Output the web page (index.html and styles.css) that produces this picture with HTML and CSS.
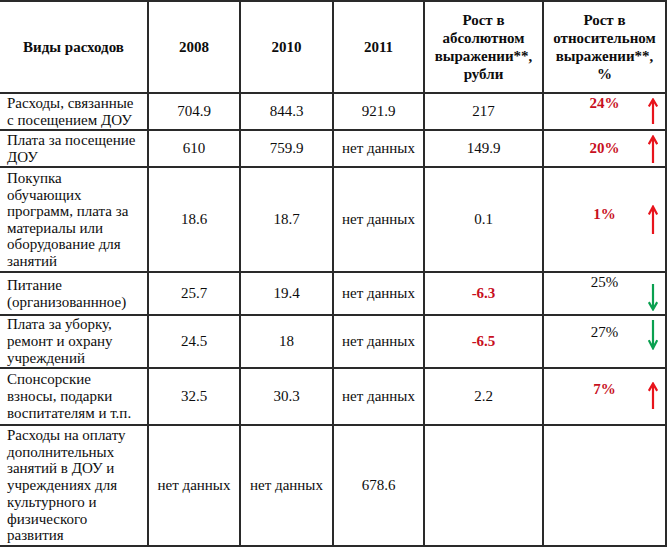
FILE: index.html
```html
<!DOCTYPE html>
<html lang="ru">
<head>
<meta charset="utf-8">
<title>Виды расходов</title>
<link rel="stylesheet" href="styles.css">
</head>
<body>
<table class="costs">
  <colgroup>
    <col class="c-name">
    <col class="c-y1">
    <col class="c-y2">
    <col class="c-y3">
    <col class="c-abs">
    <col class="c-rel">
  </colgroup>
  <thead>
    <tr class="r-head">
      <th>Виды расходов</th>
      <th>2008</th>
      <th>2010</th>
      <th>2011</th>
      <th>Рост в абсолютном выражении**, рубли</th>
      <th>Рост в относительном выражении**, %</th>
    </tr>
  </thead>
  <tbody>
    <tr class="r1">
      <td class="name">Расходы, связанные<br>с посещением ДОУ</td>
      <td>704.9</td>
      <td>844.3</td>
      <td>921.9</td>
      <td>217</td>
      <td class="rel up lift-16"><span class="pct">24%</span><svg class="arrow a1" viewBox="0 0 10 26" preserveAspectRatio="none"><path d="M5 26V1.5M0.8 8.5L5 1.5L9.2 8.5"/></svg></td>
    </tr>
    <tr class="r2">
      <td class="name">Плата за посещение<br>ДОУ</td>
      <td>610</td>
      <td>759.9</td>
      <td>нет данных</td>
      <td>149.9</td>
      <td class="rel up"><span class="pct">20%</span><svg class="arrow a2" viewBox="0 0 10 26" preserveAspectRatio="none"><path d="M5 26V1.5M0.8 8.5L5 1.5L9.2 8.5"/></svg></td>
    </tr>
    <tr class="r3">
      <td class="name">Покупка<br>обучающих<br>программ, плата за<br>материалы или<br>оборудование для<br>занятий</td>
      <td>18.6</td>
      <td>18.7</td>
      <td>нет данных</td>
      <td>0.1</td>
      <td class="rel up lift-10"><span class="pct">1%</span><svg class="arrow a3" viewBox="0 0 10 26" preserveAspectRatio="none"><path d="M5 26V1.5M0.8 8.5L5 1.5L9.2 8.5"/></svg></td>
    </tr>
    <tr class="r4">
      <td class="name">Питание<br>(организованнное)</td>
      <td>25.7</td>
      <td>19.4</td>
      <td>нет данных</td>
      <td class="neg">-6.3</td>
      <td class="rel down lift-22"><span class="pct">25%</span><svg class="arrow a4" viewBox="0 0 10 26" preserveAspectRatio="none"><path d="M5 0V24.5M0.8 17.5L5 24.5L9.2 17.5"/></svg></td>
    </tr>
    <tr class="r5">
      <td class="name">Плата за уборку,<br>ремонт и охрану<br>учреждений</td>
      <td>24.5</td>
      <td>18</td>
      <td>нет данных</td>
      <td class="neg">-6.5</td>
      <td class="rel down lift-18"><span class="pct">27%</span><svg class="arrow a5" viewBox="0 0 10 26" preserveAspectRatio="none"><path d="M5 0V24.5M0.8 17.5L5 24.5L9.2 17.5"/></svg></td>
    </tr>
    <tr class="r6">
      <td class="name">Спонсорские<br>взносы, подарки<br>воспитателям и т.п.</td>
      <td>32.5</td>
      <td>30.3</td>
      <td>нет данных</td>
      <td>2.2</td>
      <td class="rel up lift-14"><span class="pct">7%</span><svg class="arrow a6" viewBox="0 0 10 26" preserveAspectRatio="none"><path d="M5 26V1.5M0.8 8.5L5 1.5L9.2 8.5"/></svg></td>
    </tr>
    <tr class="r7">
      <td class="name">Расходы на оплату<br>дополнительных<br>занятий в ДОУ и<br>учреждениях для<br>культурного и<br>физического<br>развития</td>
      <td>нет данных</td>
      <td>нет данных</td>
      <td>678.6</td>
      <td></td>
      <td class="rel"></td>
    </tr>
  </tbody>
</table>
</body>
</html>
```

FILE: styles.css
```css
html, body {
  margin: 0;
  padding: 0;
  background: #ffffff;
}

.costs {
  border-collapse: collapse;
  table-layout: fixed;
  width: 666px;
  font-family: "Liberation Serif", "Times New Roman", serif;
  font-size: 15px;
  line-height: 17px;
  color: #0d0d0d;
}

.c-name { width: 148px; }
.c-y1 { width: 92px; }
.c-y2 { width: 93px; }
.c-y3 { width: 91px; }
.c-abs { width: 119px; }
.c-rel { width: 123px; }

.costs th,
.costs td {
  border: 2px solid #2a2a2a;
  text-align: center;
  vertical-align: middle;
  padding: 0 4px;
}

.costs th:first-child,
.costs td:first-child {
  border-left: none;
}

.costs th {
  font-weight: bold;
  line-height: 18px;
}

.costs td.name {
  text-align: left;
  white-space: nowrap;
  padding: 0 2px 0 7px;
}

.r3 .name { line-height: 16.5px; }
.r7 .name { line-height: 16.8px; }

.r-head { height: 92px; }
.r1 { height: 37px; }
.r2 { height: 37px; }
.r3 { height: 105px; }
.r4 { height: 43px; }
.r5 { height: 53px; }
.r6 { height: 57px; }
.r7 { height: 121px; }

.neg {
  color: #c8101e;
  font-weight: bold;
}

.rel {
  position: relative;
}

.rel.up .pct {
  color: #c8101e;
  font-weight: bold;
}

.lift-10 { padding-bottom: 10px !important; }
.lift-14 { padding-bottom: 14px !important; }
.lift-16 { padding-bottom: 16px !important; }
.lift-18 { padding-bottom: 18px !important; }
.lift-22 { padding-bottom: 22px !important; }

.arrow {
  position: absolute;
  right: 7px;
  width: 10px;
  fill: none;
}

.arrow path {
  stroke-width: 2.2px;
  stroke-linecap: butt;
  stroke-linejoin: miter;
  vector-effect: non-scaling-stroke;
}

.up .arrow path { stroke: #e8141c; }
.down .arrow path { stroke: #0aa050; }

.a1 { top: 4px; height: 26px; }
.a2 { top: 4px; height: 28px; }
.a3 { top: 37px; height: 29px; }
.a4 { top: 11px; height: 27px; }
.a5 { top: 4px; height: 30px; }
.a6 { top: 13px; height: 27px; }
```
